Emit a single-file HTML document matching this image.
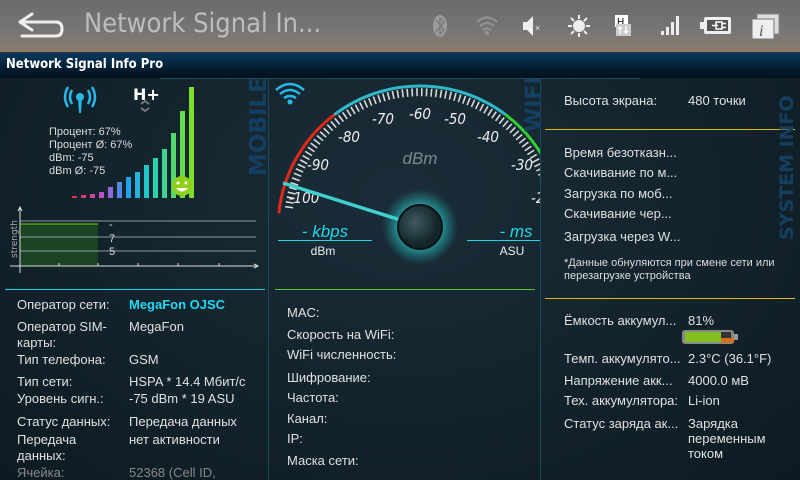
<!DOCTYPE html>
<html><head><meta charset="utf-8"><style>
*{margin:0;padding:0;box-sizing:border-box}
body{width:800px;height:480px;overflow:hidden;position:relative;background:radial-gradient(ellipse at 50% 40%,#1a2d38 0%,#12222b 60%,#0d1a22 100%);font-family:"Liberation Sans","DejaVu Sans",sans-serif;color:#e6e6e6}
.top{position:absolute;left:0;top:0;width:800px;height:52px;background:linear-gradient(#6b6b6b 0%,#747474 50%,#7f7872 75%,#8b7b6f 100%)}
.title{position:absolute;left:84px;top:8px;font-size:27px;color:#bdbdbd;font-family:"DejaVu Sans Condensed","DejaVu Sans",sans-serif}
.bar{position:absolute;left:0;top:52px;width:800px;height:26px;background:linear-gradient(#083a5e,#041b2c 70%,#02101a);border-top:1px solid #333}
.bar span{position:absolute;left:6px;top:4px;font-size:13px;font-weight:bold;color:#fff;font-family:"DejaVu Sans Condensed","DejaVu Sans",sans-serif}
.t{position:absolute;font-size:13px;color:#e0e0e0;white-space:nowrap;font-family:"Liberation Sans","DejaVu Sans",sans-serif;line-height:15px}
.s{font-size:11px;color:#ddd}
.vert{position:absolute;font-weight:bold;color:#153f60;white-space:nowrap;transform:rotate(-90deg);transform-origin:left top;font-family:"DejaVu Sans","Liberation Sans",sans-serif}
</style></head><body>
<div class="top"></div>
<svg style="position:absolute;left:0;top:0" width="800" height="52">
<path d="M20 22 L32 14 M20 22 L32 30 M20 22 H56 Q62 22 62 29 Q62 36 56 36 H22" stroke="#eee" stroke-width="3" fill="none" stroke-linecap="round"/>
<ellipse cx="440" cy="26" rx="7" ry="11" fill="#9a9a9a"/>
<path d="M436 20 L444 30 L440 34 V18 L444 22 L436 32" stroke="#777" stroke-width="1.2" fill="none"/>
<g fill="none" stroke="#929292" stroke-width="2.2"><path d="M477 22 Q487 13 497 22"/><path d="M480 26 Q487 20 494 26"/><path d="M483 30 Q487 27 491 30"/></g><circle cx="487" cy="33" r="2" fill="#929292"/>
<path d="M523 22 H527 L533 16 V36 L527 30 H523 Z" fill="#eee"/><text x="535" y="31" font-size="9" fill="#eee" font-family="Liberation Sans">×</text>
<g stroke="#eee" stroke-width="2"><circle cx="579" cy="26" r="5" fill="#eee"/><path d="M579 15V19M579 33V37M568 26H572M586 26H590M571 18L574 21M584 31L587 34M571 34L574 31M584 21L587 18"/></g>
<rect x="615" y="15" width="13" height="12" fill="#fff"/><text x="617" y="25" font-size="10" fill="#000" font-family="Liberation Sans">H</text>
<rect x="616" y="24" width="15" height="12" fill="#ccc"/><path d="M620 34V27M618 29L620 27L622 29M626 26V33M624 31L626 33L628 31" stroke="#fff" stroke-width="1.3" fill="none"/>
<g fill="#eee"><rect x="661" y="31" width="3" height="4"/><rect x="666" y="27" width="3" height="8"/><rect x="671" y="22" width="3" height="13"/><rect x="676" y="16" width="3" height="19"/></g>
<rect x="704" y="17" width="27" height="17" rx="2" fill="#eee"/><rect x="700" y="22" width="4" height="7" fill="#eee"/><rect x="707" y="20" width="21" height="11" fill="#555"/><path d="M712 25.5H718M716 22h6v7h-6zM722 23.5h4M722 27.5h4" stroke="#fff" stroke-width="1.5" fill="none"/>
<rect x="757" y="14" width="22" height="20" fill="#ddd" stroke="#888"/><rect x="752" y="19" width="22" height="20" fill="#eee" stroke="#777"/><text x="759" y="36" font-size="16" font-style="italic" fill="#555" font-family="Liberation Serif">i</text>
</svg>
<div class="title">Network Signal In...</div>
<div class="bar"><span>Network Signal Info Pro</span></div>

<svg style="position:absolute;left:0;top:0" width="800" height="480">
<defs>
<linearGradient id="g1" gradientUnits="userSpaceOnUse" x1="72" y1="0" x2="194" y2="0"><stop offset="0" stop-color="#e03040"/><stop offset=".25" stop-color="#c050d0"/><stop offset=".45" stop-color="#20a0f0"/><stop offset=".65" stop-color="#20d0c0"/><stop offset="1" stop-color="#80e020"/></linearGradient>
<radialGradient id="glow"><stop offset=".4" stop-color="#30e0e0" stop-opacity=".9"/><stop offset="1" stop-color="#20a0a0" stop-opacity="0"/></radialGradient>
<radialGradient id="hub" cx=".4" cy=".4"><stop offset="0" stop-color="#3e5a60"/><stop offset="1" stop-color="#14262a"/></radialGradient>
<clipPath id="gc"><rect x="270" y="78" width="270" height="210"/></clipPath>
</defs>
<line x1="160" y1="78.5" x2="640" y2="78.5" stroke="#1d5060" stroke-width="1"/>
<line x1="268.5" y1="78" x2="268.5" y2="480" stroke="#1d4a58"/>
<line x1="540.5" y1="78" x2="540.5" y2="480" stroke="#1d4a58"/>
<g stroke="#28b8e8" stroke-width="2.5" fill="none"><path d="M72 90Q68 97 72 104M68 87Q62 97 68 107M88 90Q92 97 88 104M92 87Q98 97 92 107"/></g>
<circle cx="80" cy="97" r="4" fill="#28b8e8"/><path d="M78 98H82L81 113H79Z" fill="#28b8e8"/>
<text x="133" y="100" font-size="16" font-weight="bold" fill="#fff" font-family="DejaVu Sans">H+</text>
<path d="M141 104l4-3 4 3M141 108l4 3 4-3" stroke="#777" stroke-width="2" fill="none"/>
<g fill="url(#g1)">
<rect x="72" y="196" width="5" height="2"/><rect x="81" y="195" width="5" height="3"/><rect x="90" y="194" width="5" height="4"/><rect x="99" y="192" width="5" height="6"/><rect x="108" y="187" width="5" height="11"/><rect x="117" y="182" width="5" height="16"/><rect x="126" y="177" width="5" height="21"/><rect x="135" y="172" width="5" height="26"/><rect x="144" y="165" width="5" height="33"/><rect x="153" y="158" width="5" height="40"/><rect x="162" y="149" width="5" height="49"/><rect x="171" y="133" width="5" height="65"/><rect x="180" y="111" width="5" height="87"/><rect x="189" y="87" width="5" height="111"/>
</g>
<circle cx="182" cy="186" r="10" fill="#8ed01c"/><circle cx="178" cy="183" r="1.5" fill="#fff"/><circle cx="186" cy="183" r="1.5" fill="#fff"/><path d="M176 188Q182 195 188 188Z" fill="#fff"/>
<rect x="20" y="224" width="78" height="42" fill="#1e4a22" opacity=".85"/>
<line x1="20" y1="224" x2="98" y2="224" stroke="#70d020" stroke-width="1"/>
<g stroke="#8a9aa0" stroke-width="1"><line x1="20" y1="221" x2="256" y2="221"/><line x1="20" y1="237" x2="256" y2="237"/><line x1="20" y1="251" x2="256" y2="251"/></g>
<g stroke="#ddd" stroke-width="1"><line x1="20" y1="208" x2="20" y2="273"/><line x1="10" y1="266" x2="258" y2="266"/><path d="M18 211L20 207L22 211M254 264L258 266L254 268" fill="none"/>
<path d="M59 263v3M98 263v3M138 263v3M178 263v3M219 263v3"/></g>
<text x="17" y="258" font-size="9" fill="#aaa" transform="rotate(-90 17 258)" font-family="DejaVu Sans">strength</text>
<text x="109" y="228" font-size="11" fill="#ddd">-</text><text x="109" y="242" font-size="11" fill="#ddd">7</text><text x="109" y="255" font-size="11" fill="#ddd">5</text>
<g stroke="#28b8e8" stroke-width="2.5" fill="none"><path d="M276 90Q290 78 304 90M280 94Q290 86 300 94M284 98Q290 94 296 98"/></g><circle cx="290" cy="102" r="2.5" fill="#28b8e8"/>
<g clip-path="url(#gc)">
<path d="M278.8 213.2 A142 142 0 0 1 334.5 114.6" stroke="#e02818" stroke-width="3" fill="none"/>
<path d="M334.5 114.6 A142 142 0 0 1 505.5 114.6" stroke="#30b8c8" stroke-width="3" fill="none"/>
<path d="M505.5 114.6 A142 142 0 0 1 561.2 213.2" stroke="#30d030" stroke-width="3" fill="none"/>
<path d="M289 208 A132 132 0 0 1 551 208" stroke="#d8d8d8" stroke-width="8" stroke-dasharray="1.6 3.2" fill="none"/>
<g font-size="15" font-style="italic" fill="#eee" text-anchor="middle" font-family="DejaVu Sans Condensed, DejaVu Sans">
<text x="304" y="203">-100</text><text x="318" y="170">-90</text><text x="349" y="142">-80</text><text x="383" y="124">-70</text><text x="420" y="119">-60</text><text x="455" y="124">-50</text><text x="488" y="142">-40</text><text x="522" y="170">-30</text><text x="542" y="203">-20</text></g>
<text x="420" y="164" font-size="17" font-style="italic" fill="#7a8a90" text-anchor="middle">dBm</text>
<circle cx="420" cy="227" r="38" fill="url(#glow)"/>
<line x1="283" y1="183" x2="410" y2="223" stroke="#40d0d0" stroke-width="3.5"/>
<circle cx="420" cy="227" r="22" fill="url(#hub)" stroke="#0a1416" stroke-width="2"/>
<text x="325" y="237" font-size="17" font-style="italic" fill="#20d8e8" text-anchor="middle">- kbps</text>
<line x1="278" y1="240.5" x2="372" y2="240.5" stroke="#20d8e8"/>
<text x="323" y="255" font-size="12" fill="#eee" text-anchor="middle">dBm</text>
<text x="516" y="237" font-size="17" font-style="italic" fill="#20d8e8" text-anchor="middle">- ms</text>
<line x1="467" y1="240.5" x2="540" y2="240.5" stroke="#20d8e8"/>
<text x="512" y="255" font-size="12" fill="#eee" text-anchor="middle">ASU</text>
</g>
<line x1="5" y1="289.5" x2="265" y2="289.5" stroke="#20d0e0"/>
<line x1="275" y1="289.5" x2="535" y2="289.5" stroke="#50c820"/>
<line x1="545" y1="129.5" x2="795" y2="129.5" stroke="#e0b818"/>
<line x1="545" y1="298.5" x2="795" y2="298.5" stroke="#e0b818"/>
<rect x="682" y="330" width="52" height="14" rx="3" fill="#888"/><rect x="734" y="334" width="4" height="6" fill="#999"/>
<rect x="685" y="332" width="36" height="10" fill="#80c020"/><rect x="721" y="332" width="10" height="10" fill="#333"/><rect x="721" y="338" width="13" height="5" fill="#d07020"/>
</svg>

<div class="vert" style="left:246px;top:176px;font-size:23px">MOBILE</div>
<div class="vert" style="left:522px;top:132px;font-size:22px">WIFI</div>
<div class="vert" style="left:776px;top:240px;font-size:19px">SYSTEM INFO</div>

<div class="t s" style="left:49px;top:125px">Процент: 67%</div>
<div class="t s" style="left:49px;top:138px">Процент Ø: 67%</div>
<div class="t s" style="left:49px;top:151px">dBm: -75</div>
<div class="t s" style="left:49px;top:164px">dBm Ø: -75</div>

<div class="t" style="left:17px;top:297px">Оператор сети:</div><div class="t" style="left:129px;top:297px;color:#20d8f0;font-weight:bold">MegaFon OJSC</div>
<div class="t" style="left:17px;top:319px">Оператор SIM-</div><div class="t" style="left:129px;top:319px">MegaFon</div>
<div class="t" style="left:17px;top:335px">карты:</div>
<div class="t" style="left:17px;top:352px">Тип телефона:</div><div class="t" style="left:129px;top:352px">GSM</div>
<div class="t" style="left:17px;top:374px">Тип сети:</div><div class="t" style="left:129px;top:374px">HSPA * 14.4 Мбит/с</div>
<div class="t" style="left:17px;top:391px">Уровень сигн.:</div><div class="t" style="left:129px;top:391px">-75 dBm * 19 ASU</div>
<div class="t" style="left:17px;top:414px">Статус данных:</div><div class="t" style="left:129px;top:414px">Передача данных</div>
<div class="t" style="left:17px;top:432px">Передача</div><div class="t" style="left:129px;top:432px">нет активности</div>
<div class="t" style="left:17px;top:448px">данных:</div>
<div class="t" style="left:17px;top:465px;color:#888">Ячейка:</div><div class="t" style="left:129px;top:465px;color:#888">52368 (Cell ID,</div>

<div class="t" style="left:287px;top:305px">MAC:</div>
<div class="t" style="left:287px;top:327px">Скорость на WiFi:</div>
<div class="t" style="left:287px;top:347px">WiFi численность:</div>
<div class="t" style="left:287px;top:370px">Шифрование:</div>
<div class="t" style="left:287px;top:390px">Частота:</div>
<div class="t" style="left:287px;top:411px">Канал:</div>
<div class="t" style="left:287px;top:431px">IP:</div>
<div class="t" style="left:287px;top:453px">Маска сети:</div>

<div class="t" style="left:564px;top:93px">Высота экрана:</div><div class="t" style="left:688px;top:93px">480 точки</div>
<div class="t" style="left:564px;top:145px">Время безотказн...</div>
<div class="t" style="left:564px;top:165px">Скачивание по м...</div>
<div class="t" style="left:564px;top:186px">Загрузка по моб...</div>
<div class="t" style="left:564px;top:206px">Скачивание чер...</div>
<div class="t" style="left:564px;top:229px">Загрузка через W...</div>
<div class="t s" style="left:564px;top:256px">*Данные обнуляются при смене сети или</div>
<div class="t s" style="left:564px;top:269px">перезагрузке устройства</div>

<div class="t" style="left:564px;top:313px">Ёмкость аккумул...</div><div class="t" style="left:688px;top:313px">81%</div>
<div class="t" style="left:564px;top:351px">Темп. аккумулято...</div><div class="t" style="left:688px;top:351px">2.3°C (36.1°F)</div>
<div class="t" style="left:564px;top:373px">Напряжение акк...</div><div class="t" style="left:688px;top:373px">4000.0 мВ</div>
<div class="t" style="left:564px;top:393px">Тех. аккумулятора:</div><div class="t" style="left:688px;top:393px">Li-ion</div>
<div class="t" style="left:564px;top:416px">Статус заряда ак...</div><div class="t" style="left:688px;top:416px">Зарядка</div>
<div class="t" style="left:688px;top:431px">переменным</div>
<div class="t" style="left:688px;top:446px">током</div>
</body></html>
